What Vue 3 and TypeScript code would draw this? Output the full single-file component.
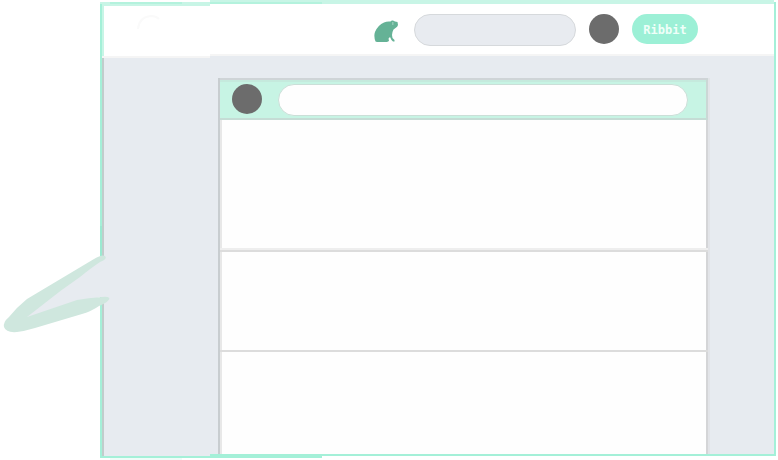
<script setup lang="ts">
interface Post {
  id: number
  height: number
}

const posts: Post[] = [
  { id: 1, height: 132 },
  { id: 2, height: 100 },
  { id: 3, height: 102 },
]
</script>

<template>
  <main class="stage">
    <section class="bubble">
      <header class="topbar">
        <div class="top-left"></div>
        <div class="top-right">
          <svg class="frog" viewBox="0 0 24 22" aria-hidden="true">
            <path d="M1.500 21.500Q-.5 16 1 12Q4 5 10 2.500Q13 1 16.500 1.500Q17.500 0 19 .5L21 1.500L23.500 2L24 5Q23.500 7 21.500 8Q19 9 18.500 12L18 15L18.500 18L20.500 20V21.500H19L17.500 20L16 17L14.500 18.500L15 21L13 22H3Z" />
            <path class="eye" d="M18 2h1.500v3h-1.500z" />
          </svg>
          <div class="search"></div>
          <div class="avatar"></div>
          <button class="ribbit" type="button">Ribbit</button>
        </div>
      </header>
      <div class="body">
        <section class="feed">
          <div class="composer">
            <div class="avatar"></div>
            <div class="field"></div>
          </div>
          <article v-for="post in posts" :key="post.id" class="post" :class="{ soft: post.id === 1 }" :style="{ height: post.height + 'px' }"></article>
        </section>
      </div>
    </section>
    <svg class="edges" viewBox="0 0 778 460" aria-hidden="true">
      <path fill="#c8f5e6" d="M100 2h110v4H100zM210 0h564v4H210zM102 6h2v50h-2z" />
      <path fill="#b4f2dd" d="M110 2h72v2h-72zM210 2h112v2H210z" />
      <path fill="#a4f0d8" d="M100 4h2v454h-2zM100 456h222v2H100zM210 454h566v2H210zM774 2h2v454h-2z" />
      <path fill="#c1cdcc" d="M102 58h2v398h-2z" />
      <path fill="#7dd9bc" d="M100 226h2v30h-2z" opacity=".25" />
      <path fill="#effcf8" d="M110 458h72v2h-72z" />
    </svg>
    <svg class="tail" viewBox="0 0 130 130" aria-hidden="true">
      <path fill="#e7ebf0" d="M112 36H100V40L24 94L28 99L100 77H112Z" />
      <path fill="#cfe7de" d="M105 36Q102 34 94 39L27 79Q17 87 9 97Q3 102 4 107Q6 113 17 112Q25 111 35 108L82 94Q92 91 99 86Q109 82 109.500 78Q107 76 102 77Q88 78 77 80L27 97L61 70.500L80 57Q91 48 100 42Q108 39 105 36Z" />
    </svg>
    <svg class="ghost" viewBox="0 0 60 34" aria-hidden="true">
      <path d="M1 15Q2 3 14 2Q19 2 22 5" />
    </svg>
  </main>
</template>

<style>
body {
  background: #fff;
  overflow: hidden;
}
</style>

<style scoped>
* {
  box-sizing: border-box;
}
.stage {
  position: relative;
  width: 778px;
  height: 460px;
  padding: 2px 2px 2px 100px;
  background: #fff;
  overflow: hidden;
}
.bubble {
  width: 676px;
  height: 456px;
}
.topbar {
  display: flex;
  align-items: flex-start;
}
.top-left {
  width: 110px;
  height: 56px;
  background: #fff;
  border-bottom: 2px solid #f5f5f5;
}
.top-right {
  display: flex;
  align-items: flex-start;
  width: 566px;
  height: 54px;
  padding: 12px 0 0 164px;
  background: #fff;
  border-bottom: 2px solid #f5f5f5;
}
.frog {
  width: 24px;
  height: 22px;
  margin: 6px 16px 0 0;
  fill: #65b296;
}
.frog .eye {
  fill: #91c9b5;
}
.search {
  width: 162px;
  height: 32px;
  border: 1.5px solid #d6d9dc;
  border-radius: 16px;
  background: #e8ebf0;
}
.avatar {
  flex: none;
  width: 30px;
  height: 30px;
  border-radius: 50%;
  background: #6c6c6c;
}
.top-right .avatar {
  margin-left: 13px;
}
.ribbit {
  width: 66px;
  height: 30px;
  margin-left: 13px;
  padding: 0;
  border: 0;
  border-radius: 15px;
  background: #9cf0d6;
  color: #effff9;
  font: bold 12px/32px "DejaVu Sans Mono", monospace;
  text-align: center;
}
.body {
  height: 400px;
  padding: 22px 66px 0 118px;
  margin-top: -2px;
  background: linear-gradient(#e7ebf0, #e7ebf0) 0 2px / 110px 398px no-repeat, linear-gradient(#e7ebf0, #e7ebf0) 110px 0 / 566px 398px no-repeat;
}
.feed {
  width: 492px;
  height: 376px;
  overflow: hidden;
  background: #fefefe;
  border-left: 2px solid #c8cdd0;
  border-right: 2px solid #e2e4e8;
  box-shadow: inset 2px 0 #e8e8e8, inset -2px 0 #d4d5d7;
}
.composer {
  display: flex;
  height: 42px;
  padding: 4px 18px 0 12px;
  background: #c7f4e4;
  border-top: 2px solid #cfd4d7;
  border-bottom: 2px solid #c5dcd5;
  border-right: 2px solid #cbd7d5;
  box-shadow: inset 0 2px #c5eadd;
}
.field {
  width: 410px;
  height: 32px;
  margin-left: 16px;
  border: 1.5px solid #cbdfd8;
  border-radius: 16px;
  background: #fefefe;
}
.post {
  border-bottom: 2px solid #dcdcdc;
}
.post:last-child {
  border-bottom: 0;
}
.post.soft {
  box-shadow: inset 0 -2px #eee;
}
.edges {
  position: absolute;
  left: 0;
  top: 0;
  width: 778px;
  height: 460px;
  shape-rendering: crispEdges;
}
.tail {
  position: absolute;
  left: 0;
  top: 220px;
  width: 130px;
  height: 130px;
}
.ghost {
  position: absolute;
  left: 137px;
  top: 14px;
  width: 60px;
  height: 34px;
  fill: none;
  stroke: #fafafa;
  stroke-width: 2;
}
</style>
